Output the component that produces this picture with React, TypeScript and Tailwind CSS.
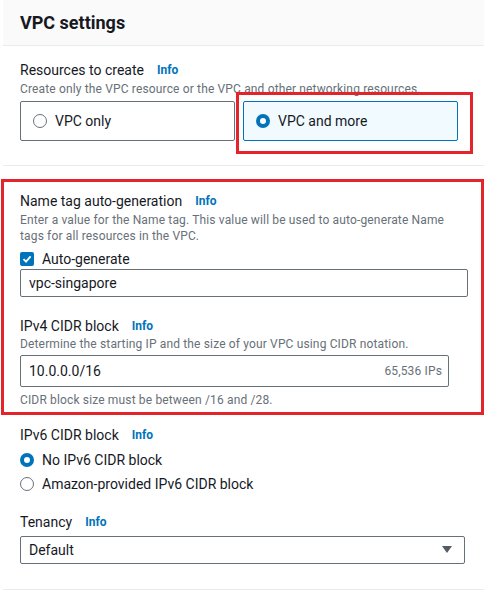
import React from 'react';

function Info() {
    return <span className="ml-[13px] text-[12px] font-bold text-[#0073bb]">Info</span>;
}

function Radio({ checked }: { checked: boolean }) {
    return checked ? (
        <span className="inline-block w-[14px] h-[14px] rounded-full border-[4px] border-[#0073bb] bg-white shrink-0" />
    ) : (
        <span className="inline-block w-[14px] h-[14px] rounded-full border-[1.5px] border-[#687078] bg-white shrink-0" />
    );
}

export default function App() {
    return (
        <div className="relative w-[484px] h-[610px] bg-white text-[#16191f] font-['Roboto',sans-serif] overflow-hidden">
            <div className="ml-[3px]">
                {/* Header */}
                <div className="h-[46px] bg-[#fafafa] border-b border-[#eaeded] pl-[17px] flex items-center">
                    <h2 className="text-[18px] font-bold leading-[22px]">VPC settings</h2>
                </div>

                {/* Resources to create */}
                <div className="pl-[17px] pr-[23px] pt-[14px] pb-[24px] border-b border-[#eaeded]">
                    <div className="h-[20px] flex items-center text-[14px]">
                        Resources to create <Info />
                    </div>
                    <p className="mt-[1px] text-[12px] leading-[16px] tracking-[0.15px] text-[#687078]">
                        Create only the VPC resource or the VPC and other networking resources.
                    </p>
                    <div className="mt-[4px] flex gap-[8px] w-[438px]">
                        <div className="flex-1 h-[40px] rounded-[2px] border border-[#687078] flex items-center gap-[8px] pl-[12px] text-[14px]">
                            <Radio checked={false} /> VPC only
                        </div>
                        <div className="flex-1 h-[40px] rounded-[2px] border border-[#0073bb] bg-[#f1faff] flex items-center gap-[8px] pl-[12px] text-[14px]">
                            <Radio checked /> VPC and more
                        </div>
                    </div>
                </div>

                {/* Details */}
                <div className="pl-[17px] pr-[16px] pt-[25px] pb-[25px] border-b border-[#eaeded]">
                    <div className="h-[20px] flex items-center text-[14px]">
                        Name tag auto-generation <Info />
                    </div>
                    <p className="mt-[1px] text-[12px] leading-[16px] tracking-[0.15px] text-[#687078] w-[445px]">
                        Enter a value for the Name tag. This value will be used to auto-generate Name tags for all resources in the VPC.
                    </p>
                    <div className="mt-[5px] h-[20px] flex items-center gap-[8px] text-[14px]">
                        <span className="w-[14px] h-[14px] rounded-[2px] bg-[#0073bb] flex items-center justify-center">
                            <svg width="10" height="10" viewBox="0 0 10 10" fill="none">
                                <path d="M1.5 5.2 L4 7.6 L8.6 2.4" stroke="white" strokeWidth="1.8" />
                            </svg>
                        </span>
                        Auto-generate
                    </div>
                    <div className="h-[28px] rounded-[2px] border border-[#687078] flex items-center pl-[8px] text-[14px]">
                        vpc-singapore
                    </div>

                    <div className="mt-[19px] h-[20px] flex items-center text-[14px]">
                        IPv4 CIDR block <Info />
                    </div>
                    <p className="text-[12px] leading-[16px] tracking-[0.15px] text-[#687078]">
                        Determine the starting IP and the size of your VPC using CIDR notation.
                    </p>
                    <div className="mt-[3px] w-[429px] h-[32px] rounded-[2px] border border-[#687078] flex items-center justify-between pl-[8px] pr-[6px]">
                        <span className="text-[14px]">10.0.0.0/16</span>
                        <span className="text-[12px] tracking-[0.15px] text-[#687078]">65,536 IPs</span>
                    </div>
                    <p className="mt-[5px] text-[12px] leading-[16px] tracking-[0.15px] text-[#687078]">
                        CIDR block size must be between /16 and /28.
                    </p>

                    <div className="mt-[17px] h-[20px] flex items-center text-[14px]">
                        IPv6 CIDR block <Info />
                    </div>
                    <div className="mt-[3px] h-[24px] flex items-center gap-[8px] text-[14px]">
                        <Radio checked /> No IPv6 CIDR block
                    </div>
                    <div className="h-[24px] flex items-center gap-[8px] text-[14px]">
                        <Radio checked={false} /> Amazon-provided IPv6 CIDR block
                    </div>

                    <div className="mt-[16px] h-[20px] flex items-center text-[14px]">
                        Tenancy <Info />
                    </div>
                    <div className="mt-[4px] w-[445px] h-[28px] rounded-[2px] border border-[#687078] flex items-center justify-between pl-[8px] pr-[12px] text-[14px]">
                        Default
                        <svg width="10" height="8" viewBox="0 0 10 8">
                            <path d="M0 0 H10 L5 7 Z" fill="#545b64" />
                        </svg>
                    </div>
                </div>
            </div>

            {/* Annotation highlights */}
            <div className="absolute left-[236px] top-[92px] w-[237px] h-[62px] border-[3px] border-[#e3242b]" />
            <div className="absolute left-[1px] top-[179px] w-[483px] h-[236px] border-[3px] border-[#e3242b]" />
        </div>
    );
}
